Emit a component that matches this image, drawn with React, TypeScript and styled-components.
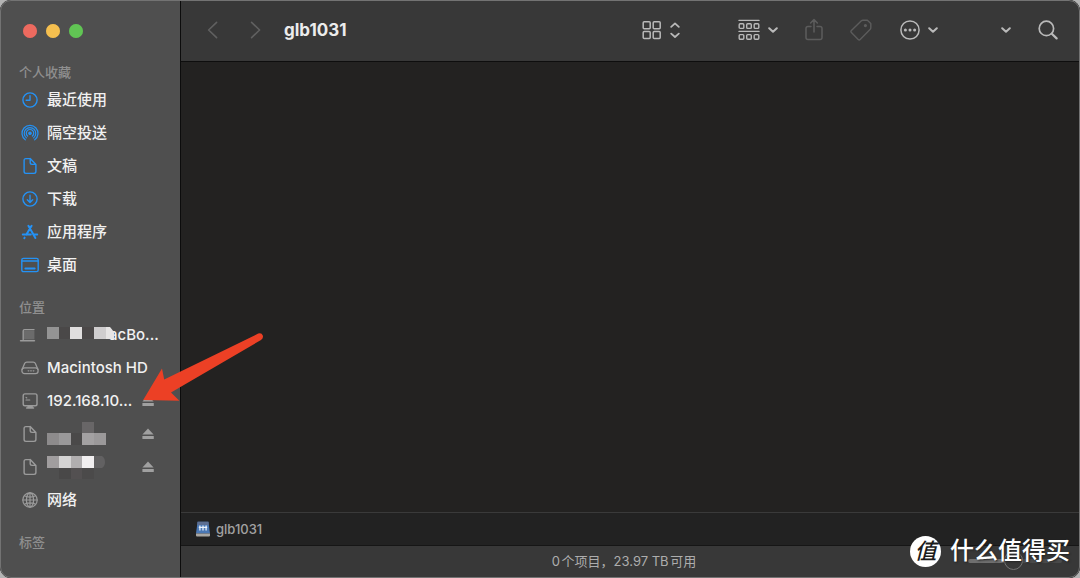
import React from "react";
import styled, { createGlobalStyle } from "styled-components";

const GlobalStyle = createGlobalStyle`
  *, *::before, *::after { box-sizing: border-box; }
  body {
    margin: 0;
    background: #b4b4b4;
    font-family: Inter, "Noto Sans CJK SC", sans-serif;
    -webkit-font-smoothing: antialiased;
  }
  button { padding: 0; border: 0; background: none; color: inherit; font: inherit; }
  svg { display: block; flex: none; }
`;

const Window = styled.div`
  position: relative;
  display: flex;
  min-height: 100vh;
  overflow: hidden;
  border-radius: 11px;
  background: #232221;

  &::after {
    content: "";
    position: absolute;
    inset: 0;
    border: 1px solid #737373;
    border-radius: 11px;
    pointer-events: none;
  }
`;

const Sidebar = styled.aside`
  flex: none;
  width: 181px;
  border-right: 1px solid #0c0c0c;
  background: #4f4f4f;
`;

const TrafficLights = styled.div`
  display: flex;
  align-items: center;
  gap: 9px;
  height: 61px;
  padding-left: 23px;
`;

const Light = styled.button<{ $color: string }>`
  width: 14px;
  height: 14px;
  border-radius: 50%;
  background: ${(p) => p.$color};
  outline: 1px solid ${(p) => p.$color}55;
  outline-offset: -1px;
`;

const Section = styled.section`
  margin-bottom: 15px;
`;

const SectionTitle = styled.h2`
  margin: 0;
  padding-left: 19px;
  color: #8f8f8f;
  font-size: 13px;
  font-weight: 500;
  line-height: 22px;
`;

const List = styled.ul`
  margin: 0;
  padding: 0;
  list-style: none;
`;

const Row = styled.li`
  display: flex;
  align-items: center;
  height: 33px;
  padding-right: 25px;
`;

const RowLink = styled.a<{ $accent?: boolean }>`
  display: flex;
  flex: 1;
  align-items: center;
  min-width: 0;
  color: ${(p) => (p.$accent ? "#2492f5" : "#9b9b9b")};
  text-decoration: none;
`;

const IconSlot = styled.span`
  display: flex;
  flex: none;
  justify-content: center;
  width: 34px;
  margin-left: 13px;
`;

const Label = styled.span`
  color: #f1f1f1;
  font-size: 15px;
  font-weight: 500;
  line-height: 20px;
  white-space: nowrap;
`;

const EjectButton = styled.button`
  width: 14px;
  height: 14px;
  color: #a0a0a0;
`;

const Main = styled.main`
  display: flex;
  flex: 1;
  flex-direction: column;
  min-width: 0;
`;

const Toolbar = styled.header`
  display: flex;
  align-items: center;
  gap: 27px;
  height: 62px;
  padding: 0 22px 2px 26px;
  border-bottom: 1px solid #0e0e0e;
  background: #383838;
  color: #b9b9b9;
`;

const History = styled.div`
  display: flex;
  gap: 31px;
  margin-right: -5px;
  color: #606060;
`;

const Title = styled.h1`
  flex: 1;
  margin: 0;
  color: #ececec;
  font-size: 17px;
  font-weight: 700;
  line-height: 24px;
`;

const ToolButton = styled.button<{ $dim?: boolean; $after?: number }>`
  display: flex;
  align-items: center;
  gap: 8px;
  margin-right: ${(p) => p.$after ?? 0}px;
  color: ${(p) => (p.$dim ? "#5c5c5c" : "inherit")};
`;

const Content = styled.div`
  flex: 1;
`;

const PathBar = styled.nav`
  display: flex;
  align-items: center;
  height: 33px;
  padding-left: 15px;
  border-top: 1px solid #3a3a3a;
  background: #222;
`;

const PathLink = styled.a`
  display: flex;
  align-items: center;
  gap: 6px;
  color: #a2a2a2;
  font-size: 13px;
  font-weight: 500;
  line-height: 20px;
  text-decoration: none;
`;

const StatusBar = styled.footer`
  display: grid;
  grid-template-columns: 1fr auto 1fr;
  align-items: center;
  height: 33px;
  padding: 0 18px 2px 5px;
  border-top: 1px solid #161616;
  background: #383838;
`;

const StatusText = styled.p`
  grid-column: 2;
  margin: 0;
  color: #adadad;
  font-size: 13px;
  line-height: 20px;
  text-autospace: normal;
`;

const SizeSlider = styled.input`
  justify-self: end;
  width: 94px;
  height: 20px;
  margin: 0;
  appearance: none;
  background: none;

  &::-webkit-slider-runnable-track {
    height: 4px;
    border-radius: 2px;
    background: linear-gradient(90deg, #6f6f6f 48%, #4a4a4a 48%);
  }
  &::-webkit-slider-thumb {
    width: 19px;
    height: 19px;
    margin-top: -8px;
    appearance: none;
    border: 1px solid #747474;
    border-radius: 50%;
    background: #383838;
  }
`;

const Pointer = styled.svg`
  position: absolute;
  top: 330px;
  left: 140px;
  pointer-events: none;
`;

const Watermark = styled.div`
  position: absolute;
  right: 10px;
  bottom: 11px;
  display: flex;
  align-items: center;
  gap: 9px;
  color: #fff;
  font-size: 24px;
  font-weight: 500;
  line-height: 32px;
  text-shadow: 1px 1px 2px #222;
  pointer-events: none;
`;

const Seal = styled.span`
  width: 31px;
  height: 31px;
  border-radius: 50%;
  background: #fff;
  color: #1c1c1c;
  font-size: 22px;
  font-style: italic;
  line-height: 30px;
  text-align: center;
  text-shadow: none;
`;

type DrawingProps = {
  w: number;
  h: number;
  stroke?: number;
  children: React.ReactNode;
};

const Drawing = ({ w, h, stroke = 1.4, children }: DrawingProps) => (
  <svg
    width={w}
    height={h}
    viewBox={`0 0 ${w} ${h}`}
    fill="none"
    stroke="currentColor"
    strokeWidth={stroke}
    strokeLinecap="round"
    strokeLinejoin="round"
    aria-hidden="true"
  >
    {children}
  </svg>
);

const ClockIcon = () => (
  <Drawing w={18} h={18}>
    <circle cx="9" cy="9" r="7.1" />
    <path d="M9 4.6V9.2H5.2" />
  </Drawing>
);

const AirDropIcon = () => (
  <Drawing w={18} h={18} stroke={1.2}>
    <path d="M4.3 15.8A8 8 0 1 1 13.7 15.8" />
    <path d="M5.4 13.9A5.8 5.8 0 1 1 12.6 13.9" />
    <path d="M6.6 12A3.7 3.7 0 1 1 11.4 12" />
    <circle cx="9" cy="9.3" r="1.2" fill="currentColor" />
  </Drawing>
);

const DocumentIcon = () => (
  <Drawing w={18} h={18}>
    <path d="M9.2 1.6H4.9Q3.1 1.6 3.1 3.4V14.6Q3.1 16.4 4.9 16.4H13Q14.9 16.4 14.9 14.6V7.4L9.2 1.6V5.6Q9.2 7.4 11 7.4H14.9" />
  </Drawing>
);

const DownloadIcon = () => (
  <Drawing w={18} h={18}>
    <circle cx="9" cy="9" r="7.1" />
    <path d="M9 5.2V12.2M6.3 9.8 9 12.4 11.7 9.8" />
  </Drawing>
);

const AppsIcon = () => (
  <Drawing w={18} h={18} stroke={2}>
    <path d="M7.4 2.8 14.4 15M10.6 2.8 5.4 11.6M3.6 14.6 3.3 15.2M1.8 11.6H9.8M13.2 11.6H16.2" />
  </Drawing>
);

const DesktopIcon = () => (
  <Drawing w={18} h={18}>
    <rect x="0.8" y="2.4" width="16.4" height="13.2" rx="1.6" />
    <path d="M1 5H17" />
    <path d="M4.4 12.4H13.6" strokeWidth="2" />
  </Drawing>
);

const LaptopIcon = () => (
  <Drawing w={22} h={18}>
    <path d="M4.2 13.4V5Q4.2 3.6 5.6 3.6H15" />
    <rect x="5" y="4.4" width="10.4" height="9" fill="#6b6b6b" stroke="none" />
    <path d="M1.6 14.8H15.4" strokeWidth="1.6" />
  </Drawing>
);

const DiskIcon = () => (
  <Drawing w={18} h={18} stroke={1.3}>
    <path d="M1.1 10.4 3.6 4.6Q4.2 3.2 5.8 3.2H12.2Q13.8 3.2 14.4 4.6L16.9 10.4" />
    <rect x="0.9" y="8.8" width="16.2" height="5.8" rx="2.6" />
    <path d="M7.2 11.8H14" strokeDasharray="0.6 1.9" />
  </Drawing>
);

const ServerIcon = () => (
  <Drawing w={18} h={18}>
    <rect x="2.2" y="1.9" width="13.8" height="11.8" rx="1.8" />
    <path d="M5 5.4 5.8 6M5 8H8.8" strokeWidth="1.1" />
    <path d="M7 14.4H11.2V15.6H7ZM5.6 16H12.6" />
  </Drawing>
);

const GlobeIcon = () => (
  <Drawing w={18} h={18} stroke={1.2}>
    <circle cx="9" cy="9" r="7.2" />
    <ellipse cx="9" cy="9" rx="3.6" ry="7.2" />
    <path d="M9 1.8V16.2M1.8 9H16.2M3.4 4.8Q9 7.6 14.6 4.8M3.4 13.2Q9 10.4 14.6 13.2" />
  </Drawing>
);

const EjectIcon = () => (
  <svg width="14" height="14" viewBox="0 0 14 14" fill="currentColor" aria-hidden="true">
    <path d="M7 1.4 12.6 7.4H1.4Z" />
    <rect x="1.4" y="9" width="11.4" height="2.9" rx="0.5" />
  </svg>
);

const ChevronIcon = () => (
  <Drawing w={10} h={10} stroke={2}>
    <path d="M1.2 3.2 5 6.8 8.8 3.2" />
  </Drawing>
);

// The last cell of a mosaic may reach over the label that follows it.
const MosaicSvg = styled.svg`
  position: relative;
  overflow: visible;
`;

// One cell of a pixelated name: x, y, width, height, colour.
type Cell = [number, number, number, number, string];

const Mosaic = ({ width, cells, children }: { width: number; cells: Cell[]; children?: React.ReactNode }) => (
  <MosaicSvg width={width} height="33" viewBox={`0 0 ${width} 33`} aria-hidden="true">
    {cells.map(([x, y, w, h, fill]) => (
      <rect key={`${x}-${y}`} x={x} y={y} width={w} height={h} fill={fill} />
    ))}
    {children}
  </MosaicSvg>
);

const NameWithMosaic = styled.span`
  display: flex;
  align-items: center;

  ${MosaicSvg} {
    z-index: 1;
  }
`;

const Eject = () => (
  <EjectButton aria-label="推出">
    <EjectIcon />
  </EjectButton>
);

const favourites = [
  { label: "最近使用", icon: <ClockIcon /> },
  { label: "隔空投送", icon: <AirDropIcon /> },
  { label: "文稿", icon: <DocumentIcon /> },
  { label: "下载", icon: <DownloadIcon /> },
  { label: "应用程序", icon: <AppsIcon /> },
  { label: "桌面", icon: <DesktopIcon /> },
];

const locations: { icon: React.ReactNode; name: React.ReactNode; eject?: boolean }[] = [
  {
    icon: <LaptopIcon />,
    name: (
      <NameWithMosaic>
        <Mosaic
          width={62}
          cells={[
            [0, 9, 12, 12, "#949494"],
            [12, 9, 11, 12, "#4a4848"],
            [23, 9, 12, 12, "#e0dede"],
            [35, 9, 12, 12, "#4b4848"],
            [47, 9, 12, 12, "#cfcdce"],
          ]}
        >
          <path d="M59 9H63L67 14V21H59Z" fill="#e6e4e4" />
        </Mosaic>
        <Label>acBo...</Label>
      </NameWithMosaic>
    ),
  },
  { icon: <DiskIcon />, name: <Label>Macintosh HD</Label> },
  { icon: <ServerIcon />, name: <Label>192.168.10...</Label>, eject: true },
  {
    icon: <DocumentIcon />,
    name: (
      <Mosaic
        width={60}
        cells={[
          [35, 5, 12, 11, "#686667"],
          [0, 16, 12, 12, "#8d8b8c"],
          [12, 16, 12, 12, "#9a999a"],
          [24, 16, 11, 12, "#4a4949"],
          [35, 16, 12, 12, "#a3a1a2"],
          [47, 16, 12, 12, "#9b999a"],
        ]}
      />
    ),
    eject: true,
  },
  {
    icon: <DocumentIcon />,
    name: (
      <Mosaic
        width={60}
        cells={[
          [0, 6, 12, 12, "#a09d9e"],
          [12, 6, 12, 12, "#d4d3d3"],
          [24, 6, 11, 12, "#b0aeaf"],
          [35, 6, 12, 12, "#f1eff0"],
          [12, 18, 12, 11, "#494848"],
          [24, 18, 11, 11, "#535051"],
          [35, 18, 12, 11, "#4b4a4a"],
        ]}
      >
        <path d="M47 6H55Q58 8 58 12T55 18H47Z" fill="#626162" />
      </Mosaic>
    ),
    eject: true,
  },
  { icon: <GlobeIcon />, name: <Label>网络</Label> },
];

export default function App() {
  return (
    <Window>
      <GlobalStyle />
      <Sidebar>
        <TrafficLights>
          <Light $color="#ed6a5f" aria-label="关闭" />
          <Light $color="#f5bf4f" aria-label="最小化" />
          <Light $color="#61c554" aria-label="缩放" />
        </TrafficLights>
        <Section>
          <SectionTitle>个人收藏</SectionTitle>
          <List>
            {favourites.map((item) => (
              <Row key={item.label}>
                <RowLink href="#" $accent>
                  <IconSlot>{item.icon}</IconSlot>
                  <Label>{item.label}</Label>
                </RowLink>
              </Row>
            ))}
          </List>
        </Section>
        <Section>
          <SectionTitle>位置</SectionTitle>
          <List>
            {locations.map((item, i) => (
              <Row key={i}>
                <RowLink href="#">
                  <IconSlot>{item.icon}</IconSlot>
                  {item.name}
                </RowLink>
                {item.eject && <Eject />}
              </Row>
            ))}
          </List>
        </Section>
        <Section>
          <SectionTitle>标签</SectionTitle>
        </Section>
      </Sidebar>

      <Main>
        <Toolbar>
          <History>
            <ToolButton aria-label="后退">
              <Drawing w={12} h={18} stroke={1.6}>
                <path d="M9.6 1.4 1.6 9 9.6 16.6" />
              </Drawing>
            </ToolButton>
            <ToolButton aria-label="前进">
              <Drawing w={12} h={18} stroke={1.6}>
                <path d="M1.6 1.4 9.6 9 1.6 16.6" />
              </Drawing>
            </ToolButton>
          </History>
          <Title>glb1031</Title>
          <ToolButton aria-label="显示方式" $after={31}>
            <Drawing w={20} h={20} stroke={1.5}>
              <rect x="1.2" y="1.8" width="7" height="7" rx="1" />
              <rect x="11.2" y="1.8" width="7" height="7" rx="1" />
              <rect x="1.2" y="11.6" width="7" height="7" rx="1" />
              <rect x="11.2" y="11.6" width="7" height="7" rx="1" />
            </Drawing>
            <Drawing w={10} h={18} stroke={1.8}>
              <path d="M1.2 5.8 5 2.4 8.8 5.8M1.2 12.6 5 16 8.8 12.6" />
            </Drawing>
          </ToolButton>
          <ToolButton aria-label="分组">
            <Drawing w={22} h={22} stroke={1.4}>
              <path d="M1 1.4H21M1 12.4H21" />
              <rect x="1.2" y="4.8" width="4.6" height="4.6" rx="1" />
              <rect x="8.7" y="4.8" width="4.6" height="4.6" rx="1" />
              <rect x="16.2" y="4.8" width="4.6" height="4.6" rx="1" />
              <rect x="1.2" y="15.6" width="4.6" height="4.6" rx="1" />
              <rect x="8.7" y="15.6" width="4.6" height="4.6" rx="1" />
              <rect x="16.2" y="15.6" width="4.6" height="4.6" rx="1" />
            </Drawing>
            <ChevronIcon />
          </ToolButton>
          <ToolButton aria-label="共享" $dim>
            <Drawing w={18} h={24} stroke={1.5}>
              <path d="M6 8.6H3Q1 8.6 1 10.6V19.6Q1 21.6 3 21.6H15Q17 21.6 17 19.6V10.6Q17 8.6 15 8.6H12M9 14V1.8M5.6 5 9 1.6 12.4 5" />
            </Drawing>
          </ToolButton>
          <ToolButton aria-label="标签" $dim $after={1}>
            <Drawing w={22} h={24} stroke={1.4}>
              <path d="M11.4 2.8 1.4 12.6Q0.4 13.6 1.4 14.6L8.2 21.4Q9.2 22.4 10.2 21.4L20 11.6Q20.8 10.8 20.8 9.8V5.4L17.4 2.2H13Q12 2.2 11.4 2.8Z" />
              <circle cx="15.4" cy="7.6" r="0.9" fill="currentColor" />
            </Drawing>
          </ToolButton>
          <ToolButton aria-label="更多" $after={36}>
            <Drawing w={20} h={20} stroke={1.5}>
              <circle cx="10" cy="10" r="9.1" />
              <g fill="currentColor" stroke="none">
                <circle cx="5.4" cy="10" r="1.5" />
                <circle cx="10" cy="10" r="1.5" />
                <circle cx="14.6" cy="10" r="1.5" />
              </g>
            </Drawing>
            <ChevronIcon />
          </ToolButton>
          <ToolButton aria-label="展开">
            <ChevronIcon />
          </ToolButton>
          <ToolButton aria-label="搜索">
            <Drawing w={20} h={20} stroke={1.7}>
              <circle cx="8.4" cy="8.4" r="7.2" />
              <path d="M13.8 13.8 18.6 18.4" strokeWidth="2.2" />
            </Drawing>
          </ToolButton>
        </Toolbar>
        <Content />
        <PathBar>
          <PathLink href="#">
            <svg width="14" height="16" viewBox="0 0 14 16" aria-hidden="true">
              <path d="M1.6 0.8H12.4L14 12.6H0Z" fill="#4a78b5" />
              <path d="M1.6 0.8H12.4L12.8 4H1.2Z" fill="#5d6f92" />
              <path d="M0 12.6H14V14.4Q14 15.4 13 15.4H1Q0 15.4 0 14.4Z" fill="#a9a7a3" />
              <path d="M3.9 4.4V9.6M7 4.4V9.6M10.1 4.4V9.6M2.8 6.4H11.2" stroke="#e9f1fb" strokeWidth="1.3" />
            </svg>
            glb1031
          </PathLink>
        </PathBar>
        <StatusBar>
          <StatusText>0个项目，23.97 TB可用</StatusText>
          <SizeSlider type="range" aria-label="图标大小" min="0" max="100" defaultValue="48" />
        </StatusBar>
      </Main>

      <Pointer width="128" height="76" viewBox="0 0 128 76" aria-hidden="true">
        <path
          d="M3.2 70 22 38.6 24.2 49.4 118.2 3.6Q121.6 2.4 122.8 5.6 123.6 8.4 121 10L31 62.6 39.4 70.8Z"
          fill="#ec4025"
        />
      </Pointer>
      <Watermark>
        <Seal>值</Seal>
        <span>什么值得买</span>
      </Watermark>
    </Window>
  );
}
